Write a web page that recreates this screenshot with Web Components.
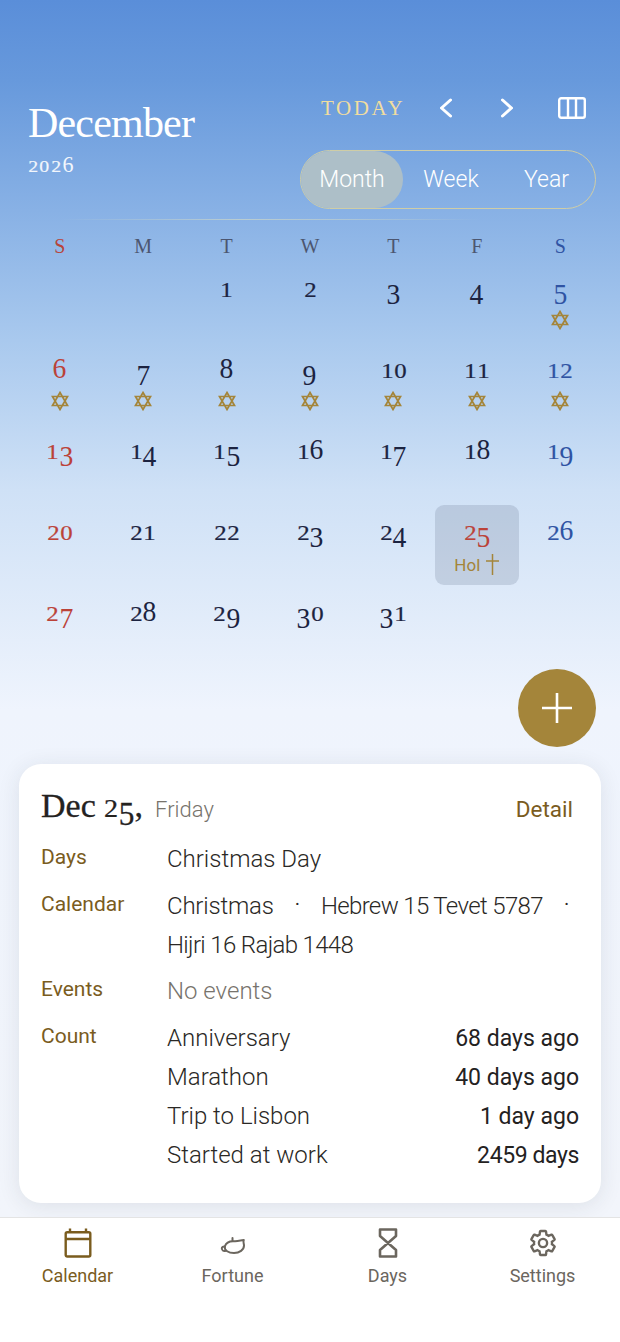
<!doctype html>
<html>
<head>
<meta charset="utf-8">
<title>Calendar</title>
<style>
  html, body { margin: 0; padding: 0; }
</style>
</head>
<body>
<cal-app>
  <cal-header></cal-header>
  <month-grid></month-grid>
  <add-fab></add-fab>
  <day-card>
    <info-row label="Days"><span>Christmas Day</span></info-row>
    <info-row label="Calendar">
      <wrap-list>
        <span class="snug">Christmas</span><b>·</b><span class="tight">Hebrew 15 Tevet 5787</span><b>·</b><span class="tight">Hijri 16 Rajab 1448</span>
      </wrap-list>
    </info-row>
    <info-row label="Events" muted><span>No events</span></info-row>
    <info-row label="Count">
      <count-row name="Anniversary" value="68 days ago"></count-row>
      <count-row name="Marathon" value="40 days ago"></count-row>
      <count-row name="Trip to Lisbon" value="1 day ago"></count-row>
      <count-row name="Started at work" value="2459 days" tight></count-row>
    </info-row>
  </day-card>
  <tab-bar>
    <tab-item label="Calendar" active>
      <svg viewBox="0 0 30 30" width="30" height="30" fill="none" stroke="currentColor" stroke-width="2.4"><rect x="2.7" y="4.2" width="24.6" height="24.3" rx="1.5"/><path d="M2.7 11h24.6M7 .5v3.7M23 .5v3.7"/></svg>
    </tab-item>
    <tab-item label="Fortune">
      <svg viewBox="0 0 30 30" width="30" height="30" fill="none" stroke="currentColor" stroke-width="2" stroke-linejoin="round" stroke-linecap="round"><path d="M6.800 18.500C8 15 11.500 13.300 15 13.300c3.500 0 7-.6 10.800-1.300-1 2 .2 3.500.2 5.500 0 4.300-4.500 7.500-10 7.500-5.500 0-9.800-2.500-9.200-6.500z"/><path d="M6.800 18.500c-3-.5-4 2.500-2 4 1 .6 2.200.5 3.200 0M14.500 13v-3"/></svg>
    </tab-item>
    <tab-item label="Days">
      <svg viewBox="0 0 30 30" width="30" height="30" fill="none" stroke="currentColor" stroke-width="2.600"><path d="M7 1.500h16v6.500L15 15 7 8zM7 28.500h16V22l-8-7-8 7z" stroke-linejoin="round"/></svg>
    </tab-item>
    <tab-item label="Settings">
      <svg viewBox="0 0 24 24" width="30" height="30" fill="none" stroke="currentColor" stroke-width="1.900"><path d="M19.140 12.940c.04-.3.06-.61.06-.94 0-.32-.02-.64-.07-.94l2.030-1.580c.18-.14.23-.41.12-.61l-1.920-3.320c-.12-.22-.37-.29-.59-.22l-2.390.96c-.5-.38-1.030-.7-1.620-.94l-.36-2.540c-.04-.24-.24-.41-.48-.41h-3.840c-.24 0-.43.17-.47.41l-.36 2.540c-.59.24-1.130.57-1.620.94l-2.390-.96c-.22-.08-.47 0-.59.22L2.740 8.870c-.12.21-.08.47.12.61l2.030 1.580c-.05.3-.09.63-.09.94s.02.64.07.94l-2.030 1.580c-.18.14-.23.41-.12.61l1.920 3.320c.12.22.37.29.59.22l2.390-.96c.5.38 1.030.7 1.620.94l.36 2.540c.05.24.24.41.48.41h3.840c.24 0 .44-.17.47-.41l.36-2.540c.59-.24 1.130-.56 1.620-.94l2.390.96c.22.08.47 0 .59-.22l1.920-3.320c.12-.22.07-.47-.12-.61l-2.010-1.580z"/><circle cx="12" cy="12" r="3.300"/></svg>
    </tab-item>
  </tab-bar>
</cal-app>

<script>
const GOLD = '#a4853a'
const BROWN = '#7a5c1e'
const SERIF = '"Liberation Serif", serif'
const SANS = 'Roboto, sans-serif'

// The reference face has old style figures, Liberation Serif only has lining ones.
// So each digit gets its own span: 0 1 2 are shrunk to x-height, 3 4 5 7 9 drop below the baseline.
function figureClass(ch) {
    if ('012'.includes(ch)) return 'low'
    if ('34579'.includes(ch)) return 'drop'
    if ('68'.includes(ch)) return 'tall'
    return ''
}

class OldNum extends HTMLElement {
    connectedCallback() {
        if (this.shadowRoot) return
        const shadow = this.attachShadow({mode: 'open'})
        const digits = [...this.textContent.trim()].map(ch => `<span class="${figureClass(ch)}">${ch}</span>`).join('')
        shadow.innerHTML = `
        <style>
            :host { display: inline; white-space: nowrap; }
            span { display: inline-block; line-height: 1; }
            .low { font-size: .72em; margin: 0 .05em; transform: scaleX(1.15); -webkit-text-stroke: .01em currentColor; }
            .drop { vertical-align: -.23em; margin: 0 -.02em; transform: scaleX(.92); }
            .tall { margin: 0 -.02em; transform: scaleX(.92); }
        </style>
        ${digits}`
    }
}

class CalApp extends HTMLElement {
    constructor() {
        super()
        this.attachShadow({mode: 'open'}).innerHTML = `
        <style>
            :host {
                display: flex;
                flex-direction: column;
                width: 620px;
                height: 1342px;
                overflow: hidden;
                font-family: ${SANS};
                background: linear-gradient(180deg, #5a8ed9 0, #6799dc 80px, #a9c9ee 340px, #cfe1f6 490px, #eff4fd 710px, #f2f5fb 1217px);
            }
        </style>
        <slot></slot>`
    }
}

class CalHeader extends HTMLElement {
    constructor() {
        super()
        this.attachShadow({mode: 'open'}).innerHTML = `
        <style>
            :host { display: block; }
            .top { display: flex; justify-content: space-between; padding: 88px 24px 0 28px; }
            .title { margin-top: 10px; color: #fff; font-family: ${SERIF}; }
            h1 { margin: 0; font: 400 42px/50px ${SERIF}; letter-spacing: -.8px; }
            .year { margin-top: 1px; height: 30px; font-size: 24px; line-height: 30px; letter-spacing: 1px; opacity: .9; }
            .side { width: 296px; }
            .nav { display: flex; align-items: center; height: 40px; }
            .today { margin-left: 21px; width: 82px; font: 21px/40px ${SERIF}; letter-spacing: 2.600px; color: #f1dd9f; white-space: nowrap; }
            .prev { margin-left: 37px; }
            .next { margin-left: 49px; }
            .cols { margin-left: 45px; }
            svg { display: block; }
            seg-control { margin-top: 22px; }
            .rule {
                height: 1px;
                margin-top: 10px;
                background: linear-gradient(90deg, transparent 60px, rgba(225,225,190,.55) 240px, rgba(225,225,190,.4) 350px, transparent 480px);
            }
        </style>
        <div class="top">
            <div class="title">
                <h1>December</h1>
                <div class="year"><old-num>2026</old-num></div>
            </div>
            <div class="side">
                <div class="nav">
                    <span class="today">TODAY</span>
                    <svg class="prev" width="12" height="20" viewBox="0 0 12 20" fill="none" stroke="#fff" stroke-width="3" stroke-linecap="round" stroke-linejoin="round"><path d="M10.500 2 1.500 10l9 8"/></svg>
                    <svg class="next" width="12" height="20" viewBox="0 0 12 20" fill="none" stroke="#fff" stroke-width="3" stroke-linecap="round" stroke-linejoin="round"><path d="M1.500 2l9 8-9 8"/></svg>
                    <svg class="cols" width="28" height="22" viewBox="0 0 28 22" fill="none" stroke="#fff" stroke-width="2.400"><rect x="1.200" y="1.200" width="25.600" height="19.600" rx="2"/><path d="M10 1.200v19.600M18 1.200v19.600"/></svg>
                </div>
                <seg-control></seg-control>
            </div>
        </div>
        <div class="rule"></div>`
    }
}

class SegControl extends HTMLElement {
    constructor() {
        super()
        this.attachShadow({mode: 'open'}).innerHTML = `
        <style>
            :host {
                display: flex;
                height: 59px;
                box-sizing: border-box;
                border: 1.500px solid #cfcda6;
                border-radius: 30px;
                color: #fff;
                font-size: 23px;
                font-weight: 300;
            }
            span { display: flex; align-items: center; justify-content: center; border-radius: 30px; }
            .on { width: 102px; background: #adbfc8; }
            .week { width: 96px; }
            .year { width: 95px; }
        </style>
        <span class="on">Month</span><span class="week">Week</span><span class="year">Year</span>`
    }
}

class CalDay extends HTMLElement {
    constructor() {
        super()
        this.attachShadow({mode: 'open'}).innerHTML = `
        <style>
            :host {
                display: flex;
                flex-direction: column;
                align-items: center;
                height: 81px;
                box-sizing: border-box;
                padding-top: 5px;
                font-family: ${SERIF};
                font-size: 30px;
                color: #1c2340;
            }
            :host([tone="sun"]) { color: #bb4238; }
            :host([tone="sat"]) { color: #2f53a3; }
            :host([selected]) { height: 80px; border-radius: 9px; background: rgba(100,115,140,.22); }
            .num { height: 40px; line-height: 40px; white-space: nowrap; }
            .mark { margin-top: 3px; display: flex; align-items: center; color: ${GOLD}; font: 17px/20px ${SANS}; }
            .mark svg { display: block; }
        </style>
        <div class="num"></div>
        <div class="mark"></div>`
    }

    connectedCallback() {
        this.shadowRoot.querySelector('.num').innerHTML = `<old-num>${this.getAttribute('n')}</old-num>`
        const mark = this.shadowRoot.querySelector('.mark')
        if (this.hasAttribute('star')) {
            mark.innerHTML = `<svg width="18" height="20" viewBox="0 0 18 20" fill="none" stroke="${GOLD}" stroke-width="1.700"><path d="M9 1.500 16.500 14.500h-15zM9 18.500 16.500 5.500h-15z"/></svg>`
        }
        if (this.hasAttribute('selected')) {
            mark.style.marginTop = '4px'
            mark.innerHTML = `<span>Hol</span><svg style="margin-left:6px" width="13" height="21" viewBox="0 0 13 21" fill="none" stroke="${GOLD}" stroke-width="1.500"><path d="M6.500 0v21M0 7h13"/></svg>`
        }
    }
}

class MonthGrid extends HTMLElement {
    constructor() {
        super()
        const heads = ['S', 'M', 'T', 'W', 'T', 'F', 'S'].map((d, i) => {
            const cls = i === 0 ? 'sun' : i === 6 ? 'sat' : ''
            return `<div class="head ${cls}">${d}</div>`
        }).join('')
        let days = '<div></div><div></div>'
        for (let n = 1; n <= 31; n++) {
            const col = (n + 1) % 7
            // the 25th is a public holiday, so it is red like a sunday
            const tone = col === 0 || n === 25 ? 'sun' : col === 6 ? 'sat' : ''
            const star = n >= 5 && n <= 12 ? 'star' : ''
            const sel = n === 25 ? 'selected' : ''
            days += `<cal-day n="${n}" tone="${tone}" ${star} ${sel}></cal-day>`
        }
        this.attachShadow({mode: 'open'}).innerHTML = `
        <style>
            :host { display: block; padding: 0 18px; }
            .grid { display: grid; grid-template-columns: repeat(7, 1fr); }
            .head {
                height: 42px;
                box-sizing: border-box;
                padding-top: 16px;
                text-align: center;
                font: 20px/20px ${SERIF};
                color: #4c5670;
            }
            .sun { color: #b8433a; }
            .sat { color: #2f53a3; }
        </style>
        <div class="grid">${heads}${days}</div>`
    }
}

class AddFab extends HTMLElement {
    constructor() {
        super()
        this.attachShadow({mode: 'open'}).innerHTML = `
        <style>
            :host { display: flex; justify-content: flex-end; padding: 2px 24px 0 0; }
            div { display: flex; align-items: center; justify-content: center; width: 78px; height: 78px; border-radius: 50%; background: ${GOLD}; }
            svg { display: block; }
        </style>
        <div><svg width="30" height="30" viewBox="0 0 30 30" stroke="#fff" stroke-width="2.600"><path d="M15 0v30M0 15h30"/></svg></div>`
    }
}

class DayCard extends HTMLElement {
    constructor() {
        super()
        this.attachShadow({mode: 'open'}).innerHTML = `
        <style>
            :host {
                display: block;
                margin: 17px 19px 0;
                padding: 20px 22px 28.500px;
                border-radius: 22px;
                background: #fff;
                box-shadow: 0 3px 22px rgba(40,45,60,.1);
                color: #2a2825;
                font-weight: 300;
                font-size: 24px;
            }
            .head { display: flex; align-items: baseline; height: 44px; margin-bottom: 12px; }
            .date { font: 34px/44px ${SERIF}; color: #24221f; -webkit-text-stroke: .3px currentColor; }
            .dow { margin-left: 12px; font-size: 22px; color: #77736c; }
            .detail { margin-left: auto; margin-right: 6px; font-size: 22.500px; font-weight: 400; color: ${BROWN}; }
            .rows { display: flex; flex-direction: column; gap: 7.500px; }
        </style>
        <div class="head">
            <span class="date">Dec <old-num>25</old-num>,</span>
            <span class="dow">Friday</span>
            <span class="detail">Detail</span>
        </div>
        <div class="rows"><slot></slot></div>`
    }
}

class InfoRow extends HTMLElement {
    constructor() {
        super()
        this.attachShadow({mode: 'open'}).innerHTML = `
        <style>
            :host { display: grid; grid-template-columns: 126px 1fr; line-height: 39px; }
            :host([muted]) { color: #77736c; }
            .label { font-size: 21px; font-weight: 400; line-height: 35px; color: ${BROWN}; }
        </style>
        <div class="label"></div>
        <div><slot></slot></div>`
    }
    connectedCallback() {
        this.shadowRoot.querySelector('.label').textContent = this.getAttribute('label')
    }
}

class WrapList extends HTMLElement {
    constructor() {
        super()
        this.attachShadow({mode: 'open'}).innerHTML = `
        <style>
            :host { display: flex; flex-wrap: wrap; column-gap: 21px; }
            ::slotted(b) { font-weight: 400; font-size: 20px; line-height: 34px; }
            ::slotted(.snug) { letter-spacing: -.2px; }
            ::slotted(.tight) { letter-spacing: -.65px; }
        </style>
        <slot></slot>`
    }
}

class CountRow extends HTMLElement {
    constructor() {
        super()
        this.attachShadow({mode: 'open'}).innerHTML = `
        <style>
            :host { display: flex; justify-content: space-between; height: 39px; }
            .value { font-size: 23px; font-weight: 400; color: #24221f; }
            :host([tight]) .value { letter-spacing: -.4px; }
        </style>
        <span class="name"></span><span class="value"></span>`
    }
    connectedCallback() {
        this.shadowRoot.querySelector('.name').textContent = this.getAttribute('name')
        this.shadowRoot.querySelector('.value').textContent = this.getAttribute('value')
    }
}

class TabBar extends HTMLElement {
    constructor() {
        super()
        this.attachShadow({mode: 'open'}).innerHTML = `
        <style>
            :host {
                display: grid;
                grid-template-columns: repeat(4, 155px);
                flex: 1;
                margin-top: 14px;
                border-top: 1px solid #e4e4e4;
                background: #fff;
            }
        </style>
        <slot></slot>`
    }
}

class TabItem extends HTMLElement {
    constructor() {
        super()
        this.attachShadow({mode: 'open'}).innerHTML = `
        <style>
            :host { display: flex; flex-direction: column; align-items: center; padding-top: 10px; color: #6b665e; }
            :host([active]) { color: ${BROWN}; }
            ::slotted(svg) { display: block; }
            .label { margin-top: 7px; font-size: 18px; line-height: 22px; }
        </style>
        <slot></slot>
        <div class="label"></div>`
    }
    connectedCallback() {
        this.shadowRoot.querySelector('.label').textContent = this.getAttribute('label')
    }
}

customElements.define('old-num', OldNum)
customElements.define('cal-app', CalApp)
customElements.define('cal-header', CalHeader)
customElements.define('seg-control', SegControl)
customElements.define('cal-day', CalDay)
customElements.define('month-grid', MonthGrid)
customElements.define('add-fab', AddFab)
customElements.define('day-card', DayCard)
customElements.define('info-row', InfoRow)
customElements.define('wrap-list', WrapList)
customElements.define('count-row', CountRow)
customElements.define('tab-bar', TabBar)
customElements.define('tab-item', TabItem)
</script>
</body>
</html>
